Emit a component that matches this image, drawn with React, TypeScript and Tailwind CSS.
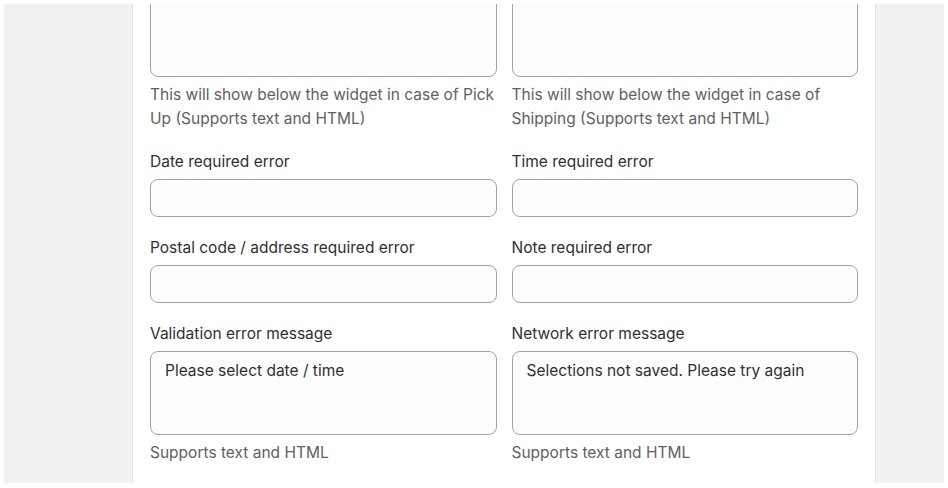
const font = { fontFamily: "Inter, 'Noto Sans', sans-serif" };

function Label({ children }: { children: string }) {
  return <div className="text-[15.5px] leading-[20px] text-[#303030] mb-[7px]">{children}</div>;
}

function Help({ children }: { children: string }) {
  return <div className="text-[15.5px] leading-[24px] text-[#616161] mt-[6px]">{children}</div>;
}

function Input() {
  return <div className="h-[38px] rounded-[8px] border border-[#a3a3a3] bg-[#fdfdfd]"></div>;
}

function Area({ value }: { value?: string }) {
  return (
    <div className="h-[84px] rounded-[8px] border border-[#a3a3a3] bg-[#fdfdfd] px-[14px] py-[9px] text-[15.5px] leading-[20px] text-[#303030]">
      {value}
    </div>
  );
}

export default function App() {
  return (
    <div className="w-[948px] h-[488px] bg-white p-[4px] pb-[5px] overflow-hidden" style={font}>
      <div className="h-full bg-[#f1f1f1] flex overflow-hidden">
        <div className="ml-[128px] w-[744px] h-full bg-white border-x border-[#e3e3e3] px-[17px] overflow-hidden">
          <div className="grid grid-cols-2 gap-x-[15px] gap-y-[21px] mt-[-11px]">
            <div>
              <Area />
              <Help>This will show below the widget in case of Pick Up (Supports text and HTML)</Help>
            </div>
            <div>
              <Area />
              <Help>This will show below the widget in case of Shipping (Supports text and HTML)</Help>
            </div>
            <div>
              <Label>Date required error</Label>
              <Input />
            </div>
            <div>
              <Label>Time required error</Label>
              <Input />
            </div>
            <div>
              <Label>Postal code / address required error</Label>
              <Input />
            </div>
            <div>
              <Label>Note required error</Label>
              <Input />
            </div>
            <div>
              <Label>Validation error message</Label>
              <Area value="Please select date / time" />
              <Help>Supports text and HTML</Help>
            </div>
            <div>
              <Label>Network error message</Label>
              <Area value="Selections not saved. Please try again" />
              <Help>Supports text and HTML</Help>
            </div>
          </div>
        </div>
      </div>
    </div>
  );
}
